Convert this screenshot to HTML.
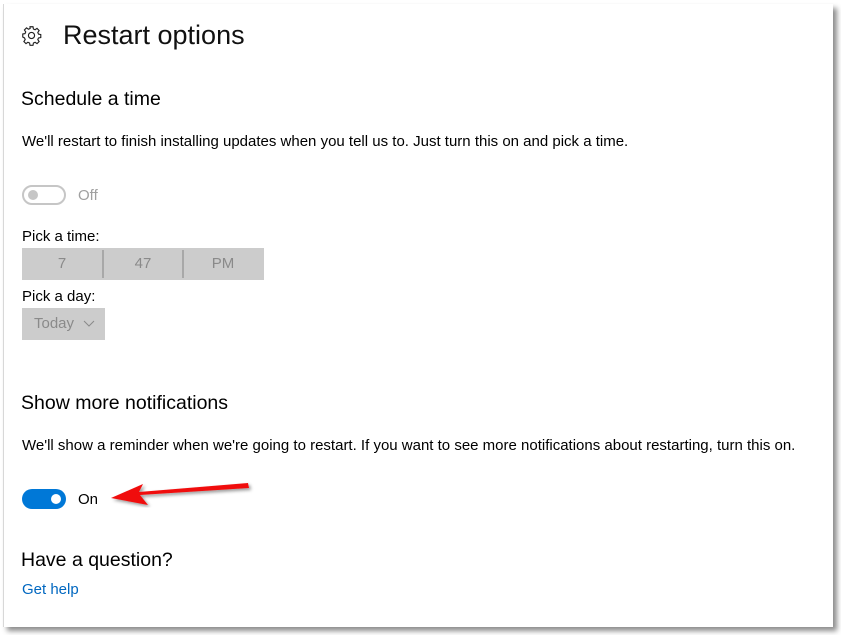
<!DOCTYPE html>
<html><head><style>
body{margin:0;width:841px;height:635px;background:#fff;position:relative;overflow:hidden;font-family:"Liberation Sans",sans-serif;color:#000}
.panel{position:absolute;left:3px;top:4px;width:829px;height:623px;background:#fff;border-left:1px solid #d8d8d8;box-shadow:4px 4px 5px rgba(0,0,0,0.45)}
.t{position:absolute;white-space:nowrap}
</style></head><body>
<div class="panel"></div>
<svg class="t" style="left:21px;top:25px" width="21" height="21" viewBox="0 0 24 24" fill="none" stroke="#222" stroke-width="1.3">
<path d="M10.3 2h3.4l.5 2.6 1.9.8 2.2-1.5 2.4 2.4-1.5 2.2.8 1.9 2.6.5v3.4l-2.6.5-.8 1.9 1.5 2.2-2.4 2.4-2.2-1.5-1.9.8-.5 2.6h-3.4l-.5-2.6-1.9-.8-2.2 1.5-2.4-2.4 1.5-2.2-.8-1.9L2 13.7v-3.4l2.6-.5.8-1.9-1.5-2.2 2.4-2.4 2.2 1.5 1.9-.8z"/><circle cx="12" cy="12" r="3.5"/></svg>
<div class="t" style="left:63px;top:20px;font-size:27px;color:#111">Restart options</div>
<div class="t" style="left:21px;top:88px;font-size:19.5px">Schedule a time</div>
<div class="t" style="left:22px;top:133px;font-size:15px">We'll restart to finish installing updates when you tell us to. Just turn this on and pick a time.</div>
<div class="t" style="left:22px;top:185px;width:44px;height:20px;border:2px solid #c6c6c6;border-radius:10px;box-sizing:border-box"></div>
<div class="t" style="left:28px;top:190px;width:10px;height:10px;border-radius:50%;background:#c6c6c6"></div>
<div class="t" style="left:78px;top:187px;font-size:15px;color:#a0a0a0">Off</div>
<div class="t" style="left:22px;top:228px;font-size:15px">Pick a time:</div>
<div class="t" style="left:22px;top:248px;width:242px;height:32px;background:#cccccc"></div>
<div class="t" style="left:102px;top:250px;width:2px;height:28px;background:#a8a8a8"></div>
<div class="t" style="left:182px;top:250px;width:2px;height:28px;background:#a8a8a8"></div>
<div class="t" style="left:22px;top:255px;width:80px;text-align:center;font-size:15px;color:#8a8a8a">7</div>
<div class="t" style="left:103px;top:255px;width:80px;text-align:center;font-size:15px;color:#8a8a8a">47</div>
<div class="t" style="left:183px;top:255px;width:80px;text-align:center;font-size:15px;color:#8a8a8a">PM</div>
<div class="t" style="left:22px;top:288px;font-size:15px">Pick a day:</div>
<div class="t" style="left:22px;top:308px;width:83px;height:32px;background:#cccccc"></div>
<div class="t" style="left:34px;top:315px;font-size:15px;color:#8a8a8a">Today</div>
<svg class="t" style="left:83px;top:320px" width="12" height="8"><path d="M1 1l5 5 5-5" fill="none" stroke="#8a8a8a" stroke-width="1"/></svg>
<div class="t" style="left:21px;top:392px;font-size:19.5px">Show more notifications</div>
<div class="t" style="left:22px;top:437px;font-size:15px">We'll show a reminder when we're going to restart. If you want to see more notifications about restarting, turn this on.</div>
<div class="t" style="left:22px;top:489px;width:44px;height:20px;border-radius:10px;background:#0078d7"></div>
<div class="t" style="left:51px;top:494px;width:10px;height:10px;border-radius:50%;background:#fff"></div>
<div class="t" style="left:78px;top:491px;font-size:15px">On</div>
<svg class="t" style="left:105px;top:478px" width="150" height="35"><defs><filter id="s"><feDropShadow dx="2" dy="2" stdDeviation="1.5" flood-opacity="0.4"/></filter></defs>
<path d="M6 20 L38 6 L34 14 L143 5 L144 10 L35 17 L43 27 Z" fill="#f01010" filter="url(#s)"/></svg>
<div class="t" style="left:21px;top:549px;font-size:19.5px">Have a question?</div>
<div class="t" style="left:22px;top:581px;font-size:15px;color:#0067c0">Get help</div>
</body></html>
